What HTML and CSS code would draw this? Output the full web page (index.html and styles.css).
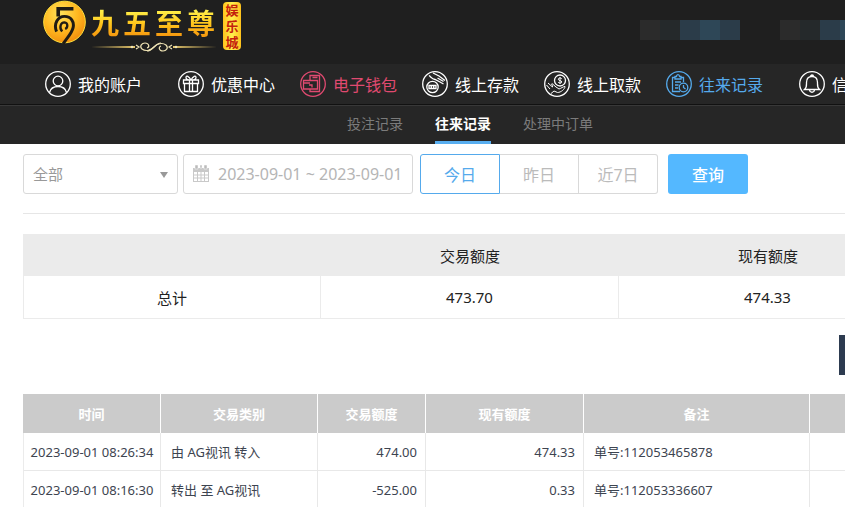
FILE: index.html
```html
<!DOCTYPE html>
<html lang="zh-CN">
<head>
<meta charset="utf-8">
<title>往来记录</title>
<link rel="stylesheet" href="styles.css">
</head>
<body>
<header class="header">
  <div class="topbar">
    <a class="logo" href="#">
      <svg class="logo-mark" viewBox="39 1 130 132" aria-hidden="true">
        <defs>
          <radialGradient id="gold" cx="0.4" cy="0.3" r="0.75">
            <stop offset="0" stop-color="#ffe45a"/>
            <stop offset="0.55" stop-color="#ffb820"/>
            <stop offset="1" stop-color="#f08a0c"/>
          </radialGradient>
        </defs>
        <circle cx="104" cy="67" r="63" fill="url(#gold)" stroke="#ffe03a" stroke-width="3"/>
        <g fill="none" stroke="#1f1b14">
          <path d="M131 27H85V50" stroke-width="11"/>
          <path d="M80 96C70 72 84 50 104 50C124 50 134 66 130 84C126 102 112 114 100 133" stroke-width="9"/>
          <path d="M97 96C87 84 92 68 104 68C115 69 115 84 106 88" stroke-width="7"/>
        </g>
      </svg>
      <span class="logo-text">
        <span class="logo-name"><span>九</span><span>五</span><span>至</span><span>尊</span></span>
        <svg class="logo-rule" viewBox="0 0 126 12" aria-hidden="true">
          <path d="M0 6L44 5V7ZM126 6L82 5V7Z" fill="#e6c66a"/>
          <g fill="none" stroke="#efe3b4" stroke-width="1.2">
            <path d="M45 4L48 6L45 8M81 4L78 6L81 8"/>
            <path d="M63 6C60 9 55 11 51 8C48 5 51 2 54 2C58 2 59 6 56 7M63 6C66 3 71 1 75 4C78 7 75 10 72 10C68 10 67 6 70 5"/>
            <path d="M56 10C62 10 64 2 70 2"/>
          </g>
          <circle cx="41" cy="6" r="1.3" fill="#efe3b4"/><circle cx="85" cy="6" r="1.3" fill="#efe3b4"/>
        </svg>
      </span>
      <span class="logo-tag"><span>娱</span><span>乐</span><span>城</span></span>
    </a>
    <div class="account">
      <div class="mosaic"><i class="m1"></i><i class="m2"></i><i class="m3"></i><i class="m4"></i><i class="m3"></i></div>
      <div class="mosaic"><i class="m1"></i><i class="m2"></i><i class="m3"></i><i class="m4"></i><i class="m3"></i></div>
    </div>
  </div>
  <nav class="nav">
    <a class="nav-item nav-wide" href="#">
      <svg viewBox="0 0 26 26"><circle cx="13" cy="13" r="12.3"/><circle cx="13" cy="10" r="4.8"/><path d="M4.5 21.5C5.500 17.500 9 15.500 13 15.500S20.500 17.500 21.500 21.500"/></svg>
      <span>我的账户</span></a>
    <a class="nav-item" href="#">
      <svg viewBox="0 0 26 26"><circle cx="13" cy="13" r="12.3"/><path d="M5.500 9H20.500V12.500H5.500ZM6.500 12.500V20.500H19.500V12.500M11.500 9V20.500M14.500 9V20.500M13 9C11 5 8 4 8 6.500C8 8.500 11 9 13 9C15 9 18 8.500 18 6.500C18 4 15 5 13 9"/></svg>
      <span>优惠中心</span></a>
    <a class="nav-item nav-hot" href="#">
      <svg viewBox="0 0 26 26"><circle cx="13" cy="13" r="12.3"/><path d="M10 9V4.500H19.500V20.500H10V18M12.500 6.500H17.500M3.500 9.500H17.500V18H3.500ZM3.500 12H10M9 14H12V16.500"/></svg>
      <span>电子钱包</span></a>
    <a class="nav-item" href="#">
      <svg viewBox="0 0 26 26"><circle cx="13" cy="13" r="12.3"/><circle cx="10.500" cy="16" r="5.700"/><path d="M7 17.500V14.500H14V17.500ZM9.300 14.500V17.500M11.700 14.500V17.500M7 4.500C9 6 10 8 13 8.500L18 11L21.500 13M11 2L17 5L23 9.500M15.500 7L21.500 10.500"/></svg>
      <span>线上存款</span></a>
    <a class="nav-item" href="#">
      <svg viewBox="0 0 26 26"><circle cx="13" cy="13" r="12.3"/><circle cx="16" cy="9.500" r="5.500"/><path d="M17.800 7.800C16.500 6.500 14.300 7 14.300 8.200C14.300 10 17.800 9.200 17.800 11C17.800 12.200 15.500 12.500 14.200 11.300M16 6V13M2.500 14L6 18M4 12L8.500 16C9 14 6.500 13 8 12.500L12 16L15 18C17 17.500 19 15.500 21 15.500C21 18 17 21.500 13.500 21.500L10 20L7 22.500" stroke-width="1"/></svg>
      <span>线上取款</span></a>
    <a class="nav-item nav-wide nav-active" href="#">
      <svg viewBox="0 0 26 26"><circle cx="13" cy="13" r="12.3"/><path d="M9 6.500H6.500V20.500H14M15 6.500H17.500V11M9 5.500H10.500C10.500 3 13.500 3 13.500 5.500H15V8H9ZM9 11H15M9 14H12.500M9 17H12"/><circle cx="17.500" cy="16.500" r="4.300"/><path d="M17.500 14V16.500L19.500 18"/></svg>
      <span>往来记录</span></a>
    <a class="nav-item" href="#">
      <svg viewBox="0 0 26 26"><circle cx="13" cy="13" r="12.3"/><path d="M5.500 18.500C8 16.500 7.500 14 7.500 11.500C7.500 7.500 10 5.500 13 5.500S18.500 7.500 18.500 11.500C18.500 14 18 16.500 20.500 18.500ZM11.500 5.500C11.500 3.500 14.500 3.500 14.500 5.500M10.500 19C11 22 15 22 15.500 19"/></svg>
      <span>信息中心</span></a>
  </nav>
  <nav class="subnav">
    <a href="#">投注记录</a>
    <a class="current" href="#">往来记录</a>
    <a href="#">处理中订单</a>
  </nav>
</header>
<main class="content">
  <form class="filters">
    <div class="select-box">
      <select aria-label="交易类别"><option>全部</option></select>
      <span class="caret"></span>
    </div>
    <label class="date-box">
      <svg viewBox="0 0 18 18" aria-hidden="true"><path d="M1 3H17V17H1Z" fill="#c9c9c9"/><path d="M2 7H16V16H2Z" fill="#fff"/><path d="M3 0H6V4H3ZM8 0H10V3H8ZM12 0H15V4H12Z" fill="#bbb" stroke="#fff" stroke-width=".5"/><path d="M2 10H16M2 13H16M5.500 7V16M9 7V16M12.500 7V16" stroke="#c9c9c9"/></svg>
      <input type="text" aria-label="日期" value="2023-09-01 ~ 2023-09-01">
    </label>
    <div class="range">
      <button type="button" class="on">今日</button><button type="button">昨日</button><button type="button">近7日</button>
    </div>
    <button type="submit" class="query">查询</button>
  </form>
  <table class="summary">
    <thead><tr><th></th><th>交易额度</th><th>现有额度</th></tr></thead>
    <tbody><tr><td>总计</td><td>473.70</td><td>474.33</td></tr></tbody>
  </table>
  <div class="actions"><button type="button" class="export" aria-label="导出"></button></div>
  <table class="records">
    <colgroup><col class="c-time"><col class="c-type"><col class="c-amount"><col class="c-balance"><col class="c-note"><col></colgroup>
    <thead><tr><th>时间</th><th>交易类别</th><th>交易额度</th><th>现有额度</th><th>备注</th><th></th></tr></thead>
    <tbody>
      <tr><td class="time">2023-09-01 08:26:34</td><td>由 AG视讯 转入</td><td class="num">474.00</td><td class="num">474.33</td><td>单号:112053465878</td><td></td></tr>
      <tr><td class="time">2023-09-01 08:16:30</td><td>转出 至 AG视讯</td><td class="num">-525.00</td><td class="num">0.33</td><td>单号:112053336607</td><td></td></tr>
    </tbody>
  </table>
</main>
</body>
</html>
```
FILE: styles.css
```css
* { box-sizing: border-box; }
html { overflow-x: hidden; }
body {
  margin: 0;
  min-width: 940px;
  background: #fff;
  color: #222;
  font-family: "Noto Sans", "Noto Sans CJK SC", sans-serif;
  font-size: 15px;
}
a { color: inherit; text-decoration: none; }
button, input, select { font: inherit; margin: 0; }

.header { background: #262626; color: #fff; }
.topbar {
  display: flex;
  justify-content: space-between;
  height: 64px;
  padding-left: 43px;
  background: #1f1f1f;
}
.logo { display: flex; align-items: flex-start; }
.logo-mark { width: 43px; height: 44px; }
.logo-text { display: flex; flex-direction: column; padding: 5px 6px 0 5px; }
.logo-name {
  display: flex;
  gap: 4px;
  font-size: 28px;
  font-weight: 700;
  line-height: 36px;
}
.logo-name span {
  background: linear-gradient(#fff04a 15%, #ffc81e 50%, #f59a10 85%);
  -webkit-background-clip: text;
  background-clip: text;
  color: transparent;
}
.logo-rule { width: 126px; height: 12px; }
.logo-tag {
  display: flex;
  flex-direction: column;
  align-items: center;
  width: 18px;
  margin-top: 2px;
  border-radius: 4px;
  background: linear-gradient(90deg, #ffc21c, #fff04e 50%, #ffc21c);
  color: #c4200c;
  font-size: 13px;
  font-weight: 700;
  line-height: 16px;
}
.account { display: flex; gap: 40px; padding: 20px 60px 0 0; }
.mosaic { display: flex; height: 20px; }
.mosaic i { width: 20px; }
.m1 { background: #2b2b2b; }
.m2 { background: #25292b; }
.m3 { background: #2b3c49; }
.m4 { background: #2e4757; }

.nav {
  display: flex;
  gap: 25px;
  height: 41px;
  padding-left: 45px;
  border-bottom: 1px solid #111;
  font-size: 16px;
}
.nav-item { display: flex; align-items: center; gap: 7px; white-space: nowrap; }
.nav-item svg { width: 26px; height: 26px; fill: none; stroke: currentColor; stroke-width: 1.3; }
.nav-wide { margin-right: 11px; }
.nav-hot { color: #e04a70; }
.nav-active { color: #55aaec; }

.subnav {
  display: flex;
  justify-content: center;
  gap: 32px;
  height: 39px;
  border-top: 1px solid #383838;
  color: #7b7b7b;
  font-size: 14px;
  line-height: 36px;
}
.subnav .current { border-bottom: 3px solid #58aef0; color: #fff; font-weight: 700; }

.content { padding: 10px 23px; }
.filters {
  display: flex;
  padding-bottom: 19px;
  border-bottom: 1px solid #e6e6e6;
}
.select-box { position: relative; width: 155px; height: 40px; margin-right: 5px; }
.select-box select {
  width: 100%;
  height: 100%;
  padding: 0 9px;
  border: 1px solid #d9d9d9;
  border-radius: 3px;
  appearance: none;
  background: #fff;
  color: #999;
}
.caret {
  position: absolute;
  top: 18px;
  right: 10px;
  border: 4px solid transparent;
  border-top: 6px solid #999;
  border-bottom: 0;
  pointer-events: none;
}
.date-box {
  display: flex;
  align-items: center;
  gap: 8px;
  width: 230px;
  height: 40px;
  margin-right: 7px;
  padding-left: 8px;
  border: 1px solid #d9d9d9;
  border-radius: 3px;
}
.date-box svg { width: 18px; height: 18px; }
.date-box input {
  flex: 1;
  min-width: 0;
  padding: 0;
  border: 0;
  background: none;
  color: #b5b5b5;
  font-size: 16px;
}
.range { display: flex; width: 238px; margin-right: 10px; }
.range button {
  flex: 1;
  height: 40px;
  border: 1px solid #d9d9d9;
  border-left: 0;
  background: #fff;
  color: #bbb;
  font-size: 16px;
}
.range .on { border: 1px solid #55aaec; border-radius: 3px 0 0 3px; color: #55aaec; }
.range button:last-child { border-radius: 0 3px 3px 0; }
.query {
  width: 80px;
  height: 40px;
  border: 0;
  border-radius: 3px;
  background: #54b8ff;
  color: #fff;
  font-size: 16px;
  font-weight: 500;
}

table { width: 100%; border-spacing: 0; table-layout: fixed; }
.summary { margin-top: 20px; text-align: center; }
.summary th { height: 42px; padding: 0; background: #ebebeb; font-weight: 400; }
.summary td {
  height: 43px;
  padding: 0;
  border-right: 1px solid #ebebeb;
  border-bottom: 1px solid #ebebeb;
}
.summary td:first-child, .records td:first-child { border-left: 1px solid #ebebeb; }

.actions { display: flex; justify-content: flex-end; padding: 16px 0 19px; }
.export { width: 78px; height: 40px; border: 0; background: #2d3b50; color: #fff; }

.records { color: #3d4450; font-size: 13px; }
.c-time { width: 138px; }
.c-type { width: 157px; }
.c-amount { width: 108px; }
.c-balance { width: 158px; }
.c-note { width: 226px; }
.records th {
  height: 39px;
  padding: 0;
  border-right: 1px solid #fff;
  background: #cbcbcb;
  color: #fff;
  font-weight: 700;
}
.records td {
  height: 38px;
  padding: 0 8px 0 10px;
  border-right: 1px solid #e8e8e8;
  border-bottom: 1px solid #e8e8e8;
  white-space: nowrap;
}
.records .time { padding: 0; text-align: center; }
.records .num { text-align: right; }
```
